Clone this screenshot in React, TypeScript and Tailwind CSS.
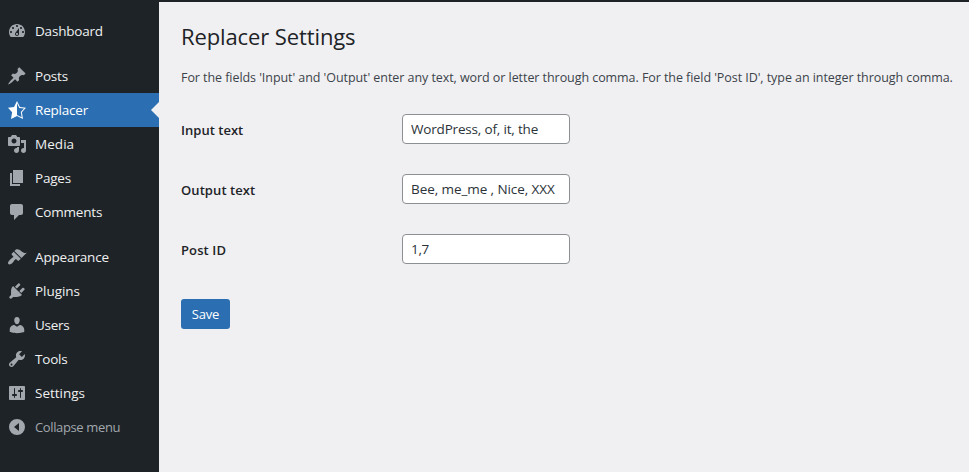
type Item = { label: string; d: string; active?: boolean; muted?: boolean; tracking: string };

const groups: Item[][] = [
  [
    {
      label: "Dashboard",
      tracking: "tracking-[-0.2px]",
      d: "M3.76 16h12.48c1.1-1.37 1.76-3.11 1.76-5 0-4.42-3.58-8-8-8s-8 3.58-8 8c0 1.89.66 3.63 1.76 5zM10 4c.55 0 1 .45 1 1s-.45 1-1 1-1-.45-1-1 .45-1 1-1zM6 6c.55 0 1 .45 1 1s-.45 1-1 1-1-.45-1-1 .45-1 1-1zm8 0c.55 0 1 .45 1 1s-.45 1-1 1-1-.45-1-1 .45-1 1-1zm-5.37 5.55L12 7v6c0 1.1-.9 2-2 2s-2-.9-2-2c0-.57.24-1.08.63-1.45zM4 10c.55 0 1 .45 1 1s-.45 1-1 1-1-.45-1-1 .45-1 1-1zm12 0c.55 0 1 .45 1 1s-.45 1-1 1-1-.45-1-1 .45-1 1-1zm-5 3c0-.55-.45-1-1-1s-1 .45-1 1 .45 1 1 1 1-.45 1-1z",
    },
  ],
  [
    {
      label: "Posts",
      tracking: "tracking-[-0.2px]",
      d: "M10.44 3.02l1.82-1.82 6.36 6.35-1.83 1.82c-1.05-.68-2.48-.57-3.41.36l-.75.75c-.92.93-1.04 2.35-.35 3.41l-1.83 1.82-2.41-2.41-2.8 2.79c-.42.42-3.38 2.71-3.8 2.29s1.86-3.39 2.28-3.81l2.79-2.79L4.1 9.36l1.83-1.82c1.05.69 2.48.57 3.4-.36l.75-.75c.93-.92 1.05-2.35.36-3.41z",
    },
    {
      label: "Replacer",
      tracking: "tracking-[-0.2px]",
      active: true,
      d: "M10 1L7 7l-6 .75 4.13 4.62L4 19l6-3 6 3-1.12-6.63L19 7.75 13 7zm0 2.24l2.34 4.69 4.65.58-3.18 3.56.87 5.15L10 14.88V3.24z",
    },
    {
      label: "Media",
      tracking: "tracking-[0.05px]",
      d: "M13 11V4c0-.55-.45-1-1-1h-1.67L9 1H5L3.67 3H2c-.55 0-1 .45-1 1v7c0 .55.45 1 1 1h10c.55 0 1-.45 1-1zM7 4.5c1.38 0 2.5 1.12 2.5 2.5S8.38 9.5 7 9.5 4.5 8.38 4.5 7 5.62 4.5 7 4.5zM14 6h5v10.5c0 1.38-1.12 2.5-2.5 2.5S14 17.88 14 16.5s1.12-2.5 2.5-2.5c.17 0 .34.02.5.05V9h-3V6zm-4 8.05V13h2v3.5c0 1.38-1.12 2.5-2.5 2.5S7 17.88 7 16.5 8.12 14 9.5 14c.17 0 .34.02.5.05z",
    },
    { label: "Pages", tracking: "tracking-[-0.2px]", d: "M6 15V2h10v13H6zm-1 1h8v2H3V5h2v11z" },
    {
      label: "Comments",
      tracking: "tracking-[-0.2px]",
      d: "M5 2h9c1.1 0 2 .9 2 2v7c0 1.1-.9 2-2 2h-2l-5 5v-5H5c-1.1 0-2-.9-2-2V4c0-1.1.9-2 2-2z",
    },
  ],
  [
    {
      label: "Appearance",
      tracking: "tracking-[-0.15px]",
      d: "M14.48 11.06L7.41 3.99l1.5-1.5c.5-.56 2.3-.47 3.51.32 1.21.8 1.43 1.28 2.91 2.1 1.18.64 2.45 1.26 4.45.85zm-.71.71L6.7 4.7 4.93 6.47c-.39.39-.39 1.02 0 1.41l1.06 1.06c.39.39.39 1.03 0 1.42-.6.6-1.43 1.11-2.21 1.69-.35.26-.7.53-1.01.84C1.43 14.23.4 16.08 1.4 17.07c.99 1 2.84-.03 4.18-1.36.31-.31.58-.66.85-1.02.57-.78 1.08-1.61 1.69-2.21.39-.39 1.02-.39 1.41 0l1.06 1.06c.39.39 1.02.39 1.41 0z",
    },
    {
      label: "Plugins",
      tracking: "tracking-[-0.05px]",
      d: "M13.11 4.36L9.87 7.6 8 5.73l3.24-3.24c.35-.34 1.05-.2 1.56.32.52.51.66 1.21.31 1.55zm-8 1.77l.91-1.12 9.01 9.01-1.19.84c-.71.71-2.63 1.16-3.82 1.16H6.14L4.9 17.26c-.59.59-1.54.59-2.12 0-.59-.58-.59-1.53 0-2.12l1.24-1.24v-3.88c0-1.13.4-3.19 1.09-3.89zm7.26 3.97l3.24-3.24c.34-.35 1.04-.21 1.55.31.52.51.66 1.21.31 1.55l-3.24 3.25z",
    },
    {
      label: "Users",
      tracking: "tracking-[-0.25px]",
      d: "M10 9.25c-2.27 0-2.73-3.44-2.73-3.44C7 4.02 7.82 2 9.97 2c2.16 0 2.98 2.02 2.71 3.81 0 0-.41 3.44-2.68 3.44zm0 2.57L12.72 10c2.39 0 4.52 2.33 4.52 4.53v2.49s-3.65 1.13-7.24 1.13c-3.65 0-7.24-1.13-7.24-1.13v-2.49c0-2.25 1.94-4.48 4.47-4.48z",
    },
    {
      label: "Tools",
      tracking: "tracking-[-0.2px]",
      d: "M16.68 9.77c-1.34 1.34-3.3 1.67-4.95.99l-5.41 6.52c-.99.99-2.59.99-3.58 0s-.99-2.59 0-3.57l6.52-5.42c-.68-1.65-.35-3.61.99-4.95 1.28-1.28 3.12-1.62 4.72-1.06l-2.89 2.89 2.82 2.82 2.86-2.87c.53 1.58.18 3.39-1.08 4.65zM3.81 16.21c.4.39 1.04.39 1.43 0 .4-.4.4-1.04 0-1.43-.39-.4-1.03-.4-1.43 0-.39.39-.39 1.03 0 1.43z",
    },
    {
      label: "Settings",
      tracking: "tracking-[0px]",
      d: "M18 16V4c0-.55-.45-1-1-1H3c-.55 0-1 .45-1 1v12c0 .55.45 1 1 1h14c.55 0 1-.45 1-1zM8 11h1c.55 0 1 .45 1 1s-.45 1-1 1H8v1.5c0 .28-.22.5-.5.5s-.5-.22-.5-.5V13H6c-.55 0-1-.45-1-1s.45-1 1-1h1V5.5c0-.28.22-.5.5-.5s.5.22.5.5V11zm5-2h-1c-.55 0-1-.45-1-1s.45-1 1-1h1V5.5c0-.28.22-.5.5-.5s.5.22.5.5V7h1c.55 0 1 .45 1 1s-.45 1-1 1h-1v5.5c0 .28-.22.5-.5.5s-.5-.22-.5-.5V9z",
    },
    {
      label: "Collapse menu",
      tracking: "tracking-[-0.37px]",
      muted: true,
      d: "M10 2a8 8 0 1 0 0 16 8 8 0 0 0 0-16zM12 6v8l-5-4z",
    },
  ],
];

function MenuRow({ item }: { item: Item }) {
  const tone = item.active ? "bg-[#2b6fb2] text-white" : item.muted ? "text-[#a2a7ad]" : "text-[#f0f0f1]";
  return (
    <li className={`relative flex h-[34px] items-center pl-[7px] ${tone}`}>
      <svg
        viewBox="0 0 20 20"
        className={`size-5 shrink-0 ${item.active ? "fill-white" : "fill-[#a2a7ad]"}`}
        fillRule="evenodd"
      >
        <path d={item.d} />
      </svg>
      <span
        className={`ml-2 whitespace-nowrap leading-5 ${item.muted ? "text-[13px]" : "text-[13.5px]"} ${item.tracking}`}
      >
        {item.label}
      </span>
      {item.active && (
        <span className="absolute right-0 top-[9px] border-y-8 border-r-8 border-y-transparent border-r-[#f0f0f2]" />
      )}
    </li>
  );
}

const fields = [
  { label: "Input text", value: "WordPress, of, it, the", tracking: "tracking-[-0.18px]", labelTracking: "tracking-[0.02px]" },
  { label: "Output text", value: "Bee, me_me , Nice, XXX", tracking: "tracking-[-0.08px]", labelTracking: "tracking-[0.08px]" },
  { label: "Post ID", value: "1,7", tracking: "tracking-[-0.3px]", labelTracking: "tracking-[0.12px]" },
];

export default function App() {
  return (
    <div className="flex h-[472px] w-[969px] flex-col overflow-hidden bg-[#f0f0f2] font-['Open_Sans','Noto_Sans',sans-serif]">
      <header className="h-0.5 shrink-0 bg-[#1d2327]" />
      <div className="flex min-h-0 flex-1">
        <nav className="flex w-[159px] shrink-0 flex-col gap-[11px] bg-[#1d2327] pt-3">
          {groups.map((group) => (
            <ul key={group[0].label}>
              {group.map((item) => (
                <MenuRow key={item.label} item={item} />
              ))}
            </ul>
          ))}
        </nav>
        <main className="flex-1 pl-[22px] pt-[19px]">
          <h1 className="whitespace-nowrap text-[22px] leading-[30px] tracking-[-0.11px] text-[#1d2327]">Replacer Settings</h1>
          <p className="mt-[17px] whitespace-nowrap text-[12.5px] leading-5 tracking-[-0.062px] text-[#3c434a]">
            For the fields 'Input' and 'Output' enter any text, word or letter through comma. For the field 'Post ID', type an
            integer through comma.
          </p>
          <form className="mt-[26px]">
            <div className="flex flex-col gap-[30px]">
              {fields.map((f) => (
                <div key={f.label} className="flex h-[30px]">
                  <label
                    className={`w-[221px] whitespace-nowrap pt-[7px] text-[13px] font-semibold leading-[18px] text-[#1d2327] ${f.labelTracking}`}
                  >
                    {f.label}
                  </label>
                  <input
                    defaultValue={f.value}
                    className={`h-[30px] w-[168px] rounded-[4px] border border-[#8c8f94] bg-white px-2 text-[13.5px] leading-7 text-[#2c3338] ${f.tracking}`}
                  />
                </div>
              ))}
            </div>
            <button
              type="button"
              className="mt-[35px] flex h-[30px] w-[49px] items-center justify-center rounded-[3px] bg-[#2b6fb2] pt-0.5 text-[13px] tracking-[-0.2px] text-white"
            >
              Save
            </button>
          </form>
        </main>
      </div>
    </div>
  );
}
